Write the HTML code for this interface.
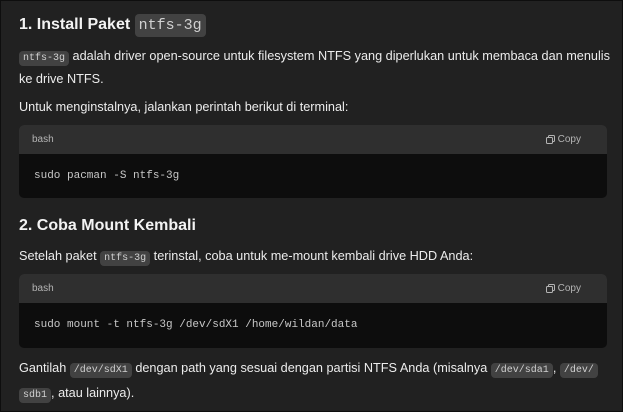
<!DOCTYPE html>
<html><head><style>
*{margin:0;padding:0;box-sizing:border-box}
html,body{width:623px;height:412px;overflow:hidden}
body{background:#212121;color:#ececec;font-family:"Liberation Sans",sans-serif;font-size:12.7px;border:1px solid #0e0e0e;position:relative}
.a{position:absolute;left:18px;white-space:nowrap}
h1{font-size:16px;font-weight:bold;color:#f3f3f3}
code{font-family:"Liberation Mono",monospace;font-size:10px;background:#424242;color:#d0d0d0;padding:2px 4px;border-radius:4px}
h1 code{font-size:15px;font-weight:normal;padding:3px 4px}
.cb{position:absolute;left:18px;width:588px;border-radius:5px;overflow:hidden;background:#0d0d0d}
.hd{height:29px;background:#2f2f2f;font-size:10px;color:#b4b4b4;padding:0 26px 0 13px;display:flex;align-items:center;justify-content:space-between}
.hd span.c{display:flex;align-items:center;gap:3px;color:#b4b4b4}
.bd{font-family:"Liberation Mono",monospace;font-size:11px;color:#c8c8c8;padding:16px 15px}
</style></head><body>
<h1 class="a" style="top:15px">1. Install Paket <code>ntfs-3g</code></h1>
<div class="a" style="top:45px;line-height:21px"><code>ntfs-3g</code> adalah driver open-source untuk filesystem NTFS yang diperlukan untuk membaca dan menulis<br>ke drive NTFS.</div>
<div class="a" style="top:99px">Untuk menginstalnya, jalankan perintah berikut di terminal:</div>
<div class="cb" style="top:124px;height:73px"><div class="hd"><span>bash</span><span class="c"><svg width="9" height="9" viewBox="0 0 9 9" fill="none" stroke="#b4b4b4" stroke-width="1"><rect x="0.5" y="2.5" width="6" height="6" rx="1"/><path d="M2.5 2.5V1.5a1 1 0 0 1 1-1h4a1 1 0 0 1 1 1v4a1 1 0 0 1-1 1h-1"/></svg>Copy</span></div><div class="bd">sudo pacman -S ntfs-3g</div></div>
<h1 class="a" style="top:216px">2. Coba Mount Kembali</h1>
<div class="a" style="top:248px">Setelah paket <code>ntfs-3g</code> terinstal, coba untuk me-mount kembali drive HDD Anda:</div>
<div class="cb" style="top:273px;height:74px"><div class="hd"><span>bash</span><span class="c"><svg width="9" height="9" viewBox="0 0 9 9" fill="none" stroke="#b4b4b4" stroke-width="1"><rect x="0.5" y="2.5" width="6" height="6" rx="1"/><path d="M2.5 2.5V1.5a1 1 0 0 1 1-1h4a1 1 0 0 1 1 1v4a1 1 0 0 1-1 1h-1"/></svg>Copy</span></div><div class="bd">sudo mount -t ntfs-3g /dev/sdX1 /home/wildan/data</div></div>
<div class="a" style="top:356px;line-height:22px">Gantilah <code>/dev/sdX1</code> dengan path yang sesuai dengan partisi NTFS Anda (misalnya <code>/dev/sda1</code>, <code>/dev/</code><br><code>sdb1</code>, atau lainnya).</div>
</body></html>
